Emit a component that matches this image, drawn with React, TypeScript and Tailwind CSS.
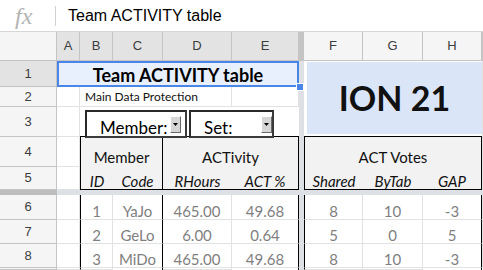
import React from "react";

const lato = "[font-family:Lato,sans-serif]";
const gl = "border-r border-r-[#e2e2e2] border-b border-b-[#e2e2e2]";
const head =
  "flex items-center justify-center border-r border-r-[#c4c4c4] border-b border-b-[#c4c4c4] text-[13px] text-[#3c3c3c]";

const data = [
  ["1", "YaJo", "465.00", "49.68", "8", "10", "-3"],
  ["2", "GeLo", "6.00", "0.64", "5", "0", "5"],
  ["3", "MiDo", "465.00", "49.68", "8", "10", "-3"],
];
const dataRows = ["row-start-8", "row-start-9", "row-start-10"];
const rowNums = ["6", "7", "8"];

const dataCols = [
  "col-start-3 border-l border-l-black border-r border-r-[#e2e2e2] border-b border-b-[#e2e2e2]",
  "col-start-4 border-r border-r-black border-b border-b-[#e2e2e2]",
  "col-start-5 border-r border-r-[#e2e2e2] border-b border-b-[#e2e2e2]",
  "col-start-6 border-r border-r-black border-b border-b-[#e2e2e2]",
  "col-start-8 border-l border-l-black border-r border-r-[#e2e2e2] border-b border-b-[#e2e2e2]",
  "col-start-9 border-r border-r-[#e2e2e2] border-b border-b-[#e2e2e2]",
  "col-start-10 border-r border-r-black border-b border-b-[#e2e2e2]",
];

function Combo({ label, width, pr }: { label: string; width: string; pr: string }) {
  return (
    <div
      className={`${width} h-[28px] flex items-center justify-between bg-white border-2 border-t-[#2a2a2a] border-l-[#2a2a2a] border-r-[#3a3a3a] border-b-[#3a3a3a] ${pr}`}
    >
      <span className={`self-end pl-[13px] text-[17px] leading-none text-black ${lato}`}>{label}</span>
      <span className="w-[11px] h-[17px] flex items-center justify-center bg-[#d6d6d6] border border-t-white border-l-white border-r-[#6a6a6a] border-b-[#6a6a6a]">
        <svg width="5" height="3" viewBox="0 0 5 3">
          <path d="M0 0h5L2.5 3z" fill="#000" />
        </svg>
      </span>
    </div>
  );
}

export default function App() {
  return (
    <div className="w-[483px] h-[270px] overflow-hidden bg-white [font-family:'Liberation_Sans',Arial,sans-serif]">
      {/* formula bar */}
      <div className="h-[32px] flex items-center border-b border-[#d6d6d6]">
        <span className="w-[55px] pl-[15px] text-[24px] italic leading-none text-[#b4b4b4] [font-family:'Liberation_Serif',serif]">
          fx
        </span>
        <div className="h-[20px] w-px bg-[#d0d0d0]" />
        <span className="ml-[12px] text-[16px] text-black">Team ACTIVITY table</span>
      </div>

      <div className="grid grid-cols-[57px_23px_33px_50px_69px_67px_5px_59px_60px_59px_1fr] grid-rows-[29px_26px_20px_30px_30px_23px_5px_25px_24px_24px_1fr] h-[238px]">
        {/* column headers */}
        <div className={`col-start-1 row-start-1 bg-[#f5f5f5] ${head}`} />
        <div className={`col-start-2 row-start-1 bg-[#e3e3e3] ${head}`}>A</div>
        <div className={`col-start-3 row-start-1 bg-[#e3e3e3] ${head}`}>B</div>
        <div className={`col-start-4 row-start-1 bg-[#e3e3e3] ${head}`}>C</div>
        <div className={`col-start-5 row-start-1 bg-[#e3e3e3] ${head}`}>D</div>
        <div className={`col-start-6 row-start-1 bg-[#e3e3e3] ${head}`}>E</div>
        <div className="col-start-7 row-start-1 bg-[#c4c4c4]" />
        <div className={`col-start-8 row-start-1 bg-[#f5f5f5] ${head}`}>F</div>
        <div className={`col-start-9 row-start-1 bg-[#f5f5f5] ${head}`}>G</div>
        <div className={`col-start-10 row-start-1 bg-[#f5f5f5] ${head}`}>H</div>
        <div className={`col-start-11 row-start-1 bg-[#f5f5f5] ${head}`} />

        {/* row headers */}
        <div className={`col-start-1 row-start-2 bg-[#e3e3e3] ${head}`}>1</div>
        <div className={`col-start-1 row-start-3 bg-[#f5f5f5] ${head}`}>2</div>
        <div className={`col-start-1 row-start-4 bg-[#f5f5f5] ${head}`}>3</div>
        <div className={`col-start-1 row-start-5 bg-[#f5f5f5] ${head}`}>4</div>
        <div className={`col-start-1 row-start-6 bg-[#f5f5f5] ${head}`}>5</div>
        <div className="col-start-1 row-start-7 bg-[#bdbdbd]" />
        {rowNums.map((n, i) => (
          <div key={n} className={`col-start-1 ${dataRows[i]} bg-[#f5f5f5] ${head}`}>
            {n}
          </div>
        ))}
        <div className={`col-start-1 row-start-11 bg-[#f5f5f5] ${head}`} />

        {/* frozen dividers */}
        <div className="col-start-7 row-start-2 row-span-10 bg-[#dde1e6]" />
        <div className="col-start-2 col-span-5 row-start-7 bg-[#dde1e6]" />
        <div className="col-start-8 col-span-4 row-start-7 bg-[#dde1e6]" />

        {/* row 1 */}
        <div
          className={`relative z-20 col-start-2 col-span-5 row-start-2 flex items-end justify-center pb-[3px] bg-[#e8f0fe] text-[18px] leading-none font-bold text-black ${lato}`}
        >
          Team ACTIVITY table
          <div className="absolute inset-0 border-2 border-[#4a86e8]" />
          <div className="absolute -right-[5px] -bottom-[4px] w-[8px] h-[8px] bg-[#4a86e8] border border-white" />
        </div>
        <div className="col-start-8 col-span-3 row-start-2 row-span-3 pl-[3px] pt-px pb-[2px] border-b border-b-black">
          <div className="h-full flex items-center justify-center bg-[#dae6f8]">
            <span className={`text-[34px] font-bold text-[#111] leading-none ${lato}`}>ION 21</span>
          </div>
        </div>
        <div className={`col-start-11 row-start-2 ${gl}`} />

        {/* row 2 */}
        <div className={`col-start-2 row-start-3 ${gl}`} />
        <div
          className={`col-start-3 col-span-3 row-start-3 flex items-center pl-[5px] text-[12px] text-[#111] whitespace-nowrap ${gl} ${lato}`}
        >
          Main Data Protection
        </div>
        <div className={`col-start-6 row-start-3 ${gl}`} />
        <div className={`col-start-11 row-start-3 ${gl}`} />

        {/* row 3 with the pickers */}
        <div className={`col-start-2 row-start-4 ${gl}`} />
        <div className="relative z-10 col-start-3 col-span-4 row-start-4 flex gap-[2px] pl-[5px] pt-[3px] border-b border-b-black">
          <Combo label="Member:" width="w-[102px]" pr="pr-[4px]" />
          <Combo label="Set:" width="w-[85px]" pr="pr-0" />
        </div>
        <div className={`col-start-11 row-start-4 ${gl}`} />

        {/* row 4 */}
        <div className={`col-start-2 row-start-5 ${gl}`} />
        <div
          className={`col-start-3 col-span-2 row-start-5 flex items-end justify-center pb-[2px] bg-[#f2f2f2] text-[15px] leading-none text-[#111] border-l border-l-black border-r border-r-black ${lato}`}
        >
          Member
        </div>
        <div
          className={`col-start-5 col-span-2 row-start-5 flex items-end justify-center pb-[2px] bg-[#f2f2f2] text-[15px] leading-none text-[#111] border-r border-r-black ${lato}`}
        >
          ACTivity
        </div>
        <div
          className={`col-start-8 col-span-3 row-start-5 flex items-end justify-center pb-[2px] bg-[#f2f2f2] text-[15px] leading-none text-[#111] border-l border-l-black border-r border-r-black ${lato}`}
        >
          ACT Votes
        </div>
        <div className={`col-start-11 row-start-5 ${gl}`} />

        {/* row 5 */}
        <div className={`col-start-2 row-start-6 ${gl}`} />
        {[
          ["col-start-3 border-l border-l-black", "ID"],
          ["col-start-4 border-r border-r-black", "Code"],
          ["col-start-5", "RHours"],
          ["col-start-6 border-r border-r-black", "ACT %"],
          ["col-start-8 border-l border-l-black", "Shared"],
          ["col-start-9", "ByTab"],
          ["col-start-10 border-r border-r-black", "GAP"],
        ].map(([cls, label]) => (
          <div
            key={label}
            className={`${cls} row-start-6 flex items-end justify-center bg-[#f2f2f2] border-b border-b-black text-[15px] leading-none italic text-[#111] ${lato}`}
          >
            {label}
          </div>
        ))}
        <div className={`col-start-11 row-start-6 ${gl}`} />

        {/* data rows */}
        {data.map((row, r) => (
          <React.Fragment key={r}>
            <div className={`col-start-2 ${dataRows[r]} ${gl}`} />
            {row.map((v, c) => (
              <div
                key={c}
                className={`${dataCols[c]} ${dataRows[r]} flex items-end justify-center text-[15px] leading-none text-[#7f7f7f] ${lato}`}
              >
                {v}
              </div>
            ))}
            <div className={`col-start-11 ${dataRows[r]} ${gl}`} />
          </React.Fragment>
        ))}

        {/* partial row 9 */}
        <div className={`col-start-2 row-start-11 ${gl}`} />
        <div className={`col-start-3 row-start-11 border-l border-l-black ${gl}`} />
        <div className="col-start-4 row-start-11 border-r border-r-black" />
        <div className={`col-start-5 row-start-11 ${gl}`} />
        <div className="col-start-6 row-start-11 border-r border-r-black" />
        <div className={`col-start-8 row-start-11 border-l border-l-black ${gl}`} />
        <div className={`col-start-9 row-start-11 ${gl}`} />
        <div className="col-start-10 row-start-11 border-r border-r-black" />
      </div>
    </div>
  );
}
